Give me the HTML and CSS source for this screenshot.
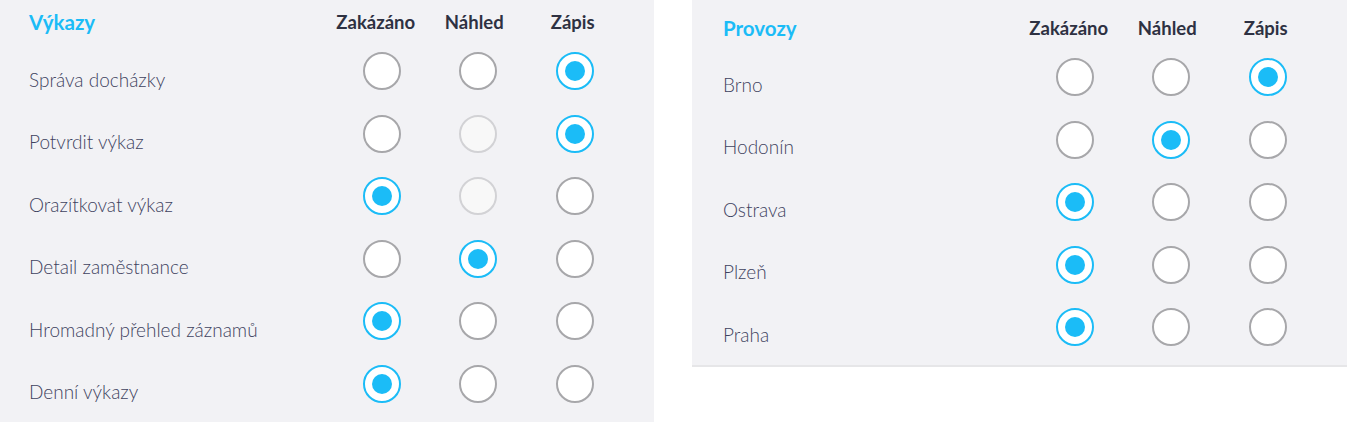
FILE: index.html
```html
<!DOCTYPE html>
<html lang="cs">
<head>
<meta charset="utf-8">
<link rel="stylesheet" href="styles.css">
</head>
<body>
<div class="page">
  <section class="panel panel-left">
    <div class="head">
      <h2 class="title">Výkazy</h2>
      <div class="col-h">Zakázáno</div>
      <div class="col-h">Náhled</div>
      <div class="col-h">Zápis</div>
    </div>
    <div class="row">
      <div class="label">Správa docházky</div>
      <div class="cell"><span class="radio"></span></div>
      <div class="cell"><span class="radio"></span></div>
      <div class="cell"><span class="radio on"></span></div>
    </div>
    <div class="row">
      <div class="label">Potvrdit výkaz</div>
      <div class="cell"><span class="radio"></span></div>
      <div class="cell"><span class="radio off"></span></div>
      <div class="cell"><span class="radio on"></span></div>
    </div>
    <div class="row">
      <div class="label">Orazítkovat výkaz</div>
      <div class="cell"><span class="radio on"></span></div>
      <div class="cell"><span class="radio off"></span></div>
      <div class="cell"><span class="radio"></span></div>
    </div>
    <div class="row">
      <div class="label">Detail zaměstnance</div>
      <div class="cell"><span class="radio"></span></div>
      <div class="cell"><span class="radio on"></span></div>
      <div class="cell"><span class="radio"></span></div>
    </div>
    <div class="row">
      <div class="label">Hromadný přehled záznamů</div>
      <div class="cell"><span class="radio on"></span></div>
      <div class="cell"><span class="radio"></span></div>
      <div class="cell"><span class="radio"></span></div>
    </div>
    <div class="row">
      <div class="label">Denní výkazy</div>
      <div class="cell"><span class="radio on"></span></div>
      <div class="cell"><span class="radio"></span></div>
      <div class="cell"><span class="radio"></span></div>
    </div>
  </section>
  <section class="panel panel-right">
    <div class="head">
      <h2 class="title">Provozy</h2>
      <div class="col-h">Zakázáno</div>
      <div class="col-h">Náhled</div>
      <div class="col-h">Zápis</div>
    </div>
    <div class="row">
      <div class="label">Brno</div>
      <div class="cell"><span class="radio"></span></div>
      <div class="cell"><span class="radio"></span></div>
      <div class="cell"><span class="radio on"></span></div>
    </div>
    <div class="row">
      <div class="label">Hodonín</div>
      <div class="cell"><span class="radio"></span></div>
      <div class="cell"><span class="radio on"></span></div>
      <div class="cell"><span class="radio"></span></div>
    </div>
    <div class="row">
      <div class="label">Ostrava</div>
      <div class="cell"><span class="radio on"></span></div>
      <div class="cell"><span class="radio"></span></div>
      <div class="cell"><span class="radio"></span></div>
    </div>
    <div class="row">
      <div class="label">Plzeň</div>
      <div class="cell"><span class="radio on"></span></div>
      <div class="cell"><span class="radio"></span></div>
      <div class="cell"><span class="radio"></span></div>
    </div>
    <div class="row">
      <div class="label">Praha</div>
      <div class="cell"><span class="radio on"></span></div>
      <div class="cell"><span class="radio"></span></div>
      <div class="cell"><span class="radio"></span></div>
    </div>
  </section>
</div>
</body>
</html>
```
FILE: styles.css
```css
* { box-sizing: border-box; }
html, body { margin: 0; padding: 0; background: #ffffff; }
body { font-family: Lato, "Liberation Sans", sans-serif; overflow: hidden; }

.page {
  display: flex;
  align-items: flex-start;
  gap: 38px;
  width: 1347px;
}

.panel {
  background: #f2f2f5;
  padding: 0 31px 8px 29px;
}
.panel-left { width: 654px; height: 430px; padding-top: 4px; }
.panel-right { width: 655px; padding-left: 31px; padding-top: 10px; padding-bottom: 6px; border-bottom: 2px solid #e6e6e8; }

.head {
  display: grid;
  grid-template-columns: 1fr 98.5px 98.5px 98.5px;
  align-items: center;
  height: 36px;
  margin-right: 1px;
}
.title {
  margin: 0;
  font-size: 20.5px;
  font-weight: 700;
  color: #1bbcf7;
}
.col-h {
  text-align: center;
  font-size: 18.5px;
  font-weight: 700;
  color: #2e3142;
}

.row {
  display: grid;
  grid-template-columns: 1fr 96.5px 96.5px 96.5px;
  height: 62.5px;
  align-items: center;
}
.label {
  font-size: 19px;
  font-weight: 300;
  color: #3f435f;
  padding-top: 16px;
}
.panel-right .label { padding-top: 14px; }
.cell { display: flex; justify-content: center; }

.radio {
  width: 38px;
  height: 38px;
  border-radius: 50%;
  border: 2px solid #a7a7aa;
  background: #ffffff;
  display: flex;
  align-items: center;
  justify-content: center;
}
.radio.on { border-color: #1bbcf7; }
.radio.on::after {
  content: "";
  width: 20px;
  height: 20px;
  border-radius: 50%;
  background: #1bbcf7;
}
.radio.off { border-color: #d2d2d5; background: #f8f8f8; }
```
